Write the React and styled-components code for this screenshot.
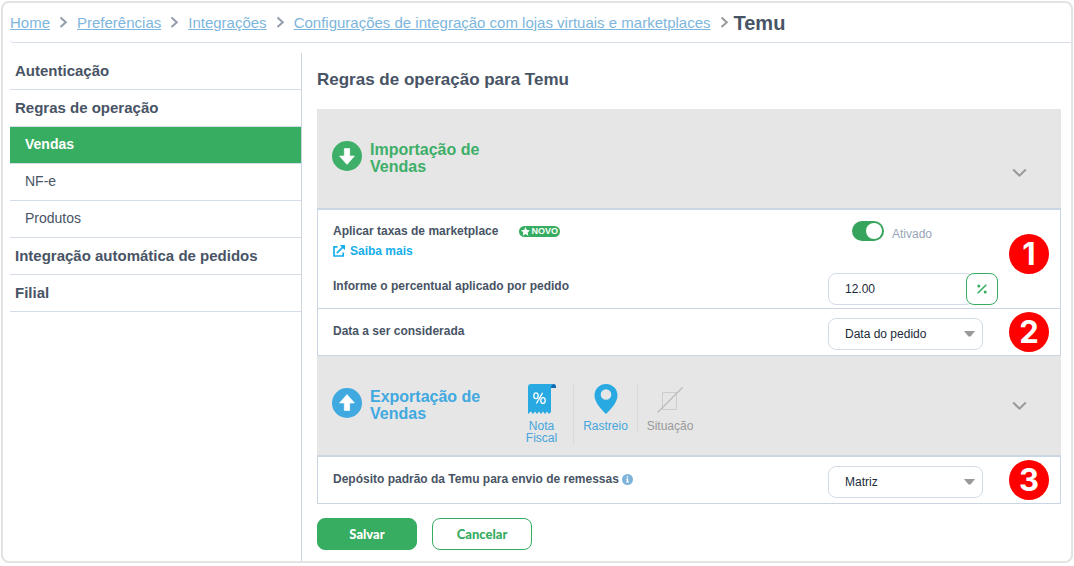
import { useState } from "react";
import styled, { createGlobalStyle } from "styled-components";

const GlobalStyle = createGlobalStyle`
  * {
    box-sizing: border-box;
  }
  body {
    margin: 0;
    background: #fff;
    color: #485465;
    font-family: "Liberation Sans", Arial, sans-serif;
    font-size: 12px;
  }
  button, input, select {
    font-family: inherit;
  }
`;

const Page = styled.div`
  display: flex;
  flex-direction: column;
  min-height: calc(100vh - 4px);
  margin: 1px 1px 3px;
  padding: 0 10px 0 7px;
  border: 2px solid #e3e3e3;
  border-radius: 8px;
`;

const Breadcrumb = styled.nav`
  display: flex;
  align-items: center;
  gap: 9px;
  height: 40px;
  border-bottom: 1px solid #d6deea;
  border-bottom-left-radius: 4px;
  font-size: 15px;
  line-height: 20px;
  margin-right: -10px;
`;

const Crumb = styled.a`
  color: #7db6dc;
  text-decoration: underline;
`;

const Current = styled.strong`
  color: #485465;
  font-size: 20px;
  margin-left: -4px;
`;

const Body = styled.div`
  display: flex;
  flex: 1;
  padding-top: 10px;
`;

const Sidebar = styled.aside`
  width: 292px;
  border-right: 1px solid #cbd5e1;
`;

const SideLink = styled.a`
  display: flex;
  align-items: center;
  height: 37px;
  padding: 0 0 2px ${(p) => (p.$sub ? 15 : 5)}px;
  border-bottom: 1px solid #d3dce8;
  background: ${(p) => (p.$active ? "#37ad61" : "transparent")};
  color: ${(p) => (p.$active ? "#fff" : "#485465")};
  font-size: ${(p) => (p.$sub ? 14 : 15)}px;
  font-weight: ${(p) => (p.$sub && !p.$active ? 400 : 700)};
  text-decoration: none;
`;

const Main = styled.main`
  flex: 1;
  padding: 0 0 11px 15px;
`;

const Title = styled.h1`
  margin: 0;
  padding: 17px 0 19px;
  font-size: 17px;
  line-height: 20px;
`;

const SectionHead = styled.header`
  display: flex;
  align-items: center;
  height: 99px;
  padding: 0 34px 0 15px;
  background: #e6e6e6;
  color: ${(p) => p.$color};
`;

const SectionTitle = styled.h2`
  display: flex;
  align-items: center;
  gap: 8px;
  width: 178px;
  margin: 0;
  padding-bottom: 2px;
  font-size: 16px;
  line-height: 17px;
  svg {
    margin-bottom: 3px;
  }
  span {
    width: 124px;
  }
`;

const Toggle = styled.button`
  display: flex;
  margin-left: auto;
  padding: ${(p) => (p.$low ? "29px 0 0" : 0)};
  border: 0;
  background: none;
  cursor: pointer;
`;

const Steps = styled.ul`
  display: flex;
  align-items: flex-start;
  margin: 0;
  padding: 17px 0 0;
  list-style: none;
`;

const Step = styled.li`
  display: flex;
  flex-direction: column;
  align-items: center;
  gap: 6px;
  width: 64px;
  height: ${(p) => (p.$tall ? 60 : 48)}px;
  border-right: ${(p) => (p.$last ? 0 : 1)}px solid #d9d9d9;
  color: ${(p) => (p.$off ? "#9a9a9a" : "#45a5dc")};
  text-align: center;
  line-height: 12px;
  span {
    max-width: 50px;
  }
`;

const Panel = styled.div`
  border: 1px solid #cbd6e4;
  border-top-width: 2px;
`;

const Row = styled.div`
  display: flex;
  gap: 11px;
  padding: 3px 11px 3px 15px;
  border-top: ${(p) => (p.$divided ? 1 : 0)}px solid #cbd6e4;
`;

const Fields = styled.div`
  flex: 1;
  display: flex;
  flex-direction: column;
  padding-top: 6px;
`;

const Field = styled.div`
  display: grid;
  grid-template-columns: 1fr 170px;
  align-items: start;
  min-height: ${(p) => (p.$tall ? 54 : 32)}px;
`;

const Label = styled.label`
  padding: 6px 0;
  font-weight: 700;
  line-height: 14px;
`;

const LabelGroup = styled.div`
  padding-top: 5px;
`;

const LabelLine = styled.div`
  display: flex;
  align-items: center;
  gap: 21px;
  line-height: 14px;
  ${Label} {
    padding: 0;
  }
`;

const NewTag = styled.span`
  display: flex;
  align-items: center;
  gap: 1px;
  height: 11px;
  padding: 0 2px;
  border-radius: 6px;
  background: #37ad61;
  color: #fff;
  font-size: 9px;
  font-weight: 700;
  line-height: 11px;
`;

const MoreLink = styled.a`
  display: inline-flex;
  align-items: center;
  gap: 5px;
  margin-top: 6px;
  color: #14aeea;
  font-weight: 700;
  line-height: 14px;
  text-decoration: none;
`;

const SwitchLine = styled.div`
  display: flex;
  align-items: center;
  gap: 8px;
  padding: 2px 0 0 24px;
`;

const SwitchInput = styled.input`
  appearance: none;
  display: flex;
  align-items: center;
  width: 32px;
  height: 20px;
  margin: 0;
  padding: 2px;
  border-radius: 10px;
  background: #9aa5b1;
  cursor: pointer;
  &::before {
    content: "";
    width: 16px;
    height: 16px;
    border-radius: 50%;
    background: #fff;
  }
  &:checked {
    justify-content: flex-end;
    background: #37a45e;
  }
`;

const SwitchText = styled.label`
  padding-top: 6px;
  color: #98a5b8;
`;

const InputGroup = styled.div`
  display: flex;
  height: 32px;
`;

const TextInput = styled.input`
  flex: 1;
  min-width: 0;
  margin-right: -8px;
  padding: 0 16px;
  border: 1px solid #d3dce8;
  border-radius: 8px;
  color: #212b39;
  font-size: 12px;
`;

const UnitButton = styled.button`
  display: grid;
  place-items: center;
  width: 32px;
  padding: 0;
  border: 1px solid #37ad61;
  border-radius: 8px;
  background: #fff;
  cursor: pointer;
`;

const SelectWrap = styled.div`
  display: grid;
  grid-template-columns: 1fr;
  align-items: center;
  width: 155px;
  svg {
    grid-area: 1 / 1;
    justify-self: end;
    margin-right: 8px;
    pointer-events: none;
  }
`;

const SelectInput = styled.select`
  grid-area: 1 / 1;
  appearance: none;
  width: 100%;
  height: 32px;
  padding: 0 28px 0 16px;
  border: 1px solid #d3dce8;
  border-radius: 8px;
  background: #fff;
  color: #212b39;
  font-size: 12px;
`;

const Marker = styled.span`
  display: grid;
  place-items: center;
  align-self: center;
  width: 40px;
  height: 40px;
  margin-bottom: ${(p) => (p.$raised ? 10 : 0)}px;
  border-radius: 50%;
  background: #fe0000;
  color: #fff;
  font-family: Inter, sans-serif;
  font-size: 31px;
  font-weight: 700;
  line-height: 40px;
`;

const InfoButton = styled.button`
  display: inline-flex;
  margin-left: 3px;
  padding: 0;
  border: 0;
  background: none;
  vertical-align: -2px;
`;

const Actions = styled.div`
  display: flex;
  gap: 15px;
  padding-top: 14px;
`;

const ActionButton = styled.button`
  width: 100px;
  height: 32px;
  border: 1px solid #37ad61;
  border-radius: 8px;
  background: ${(p) => (p.$primary ? "#37ad61" : "#fff")};
  color: ${(p) => (p.$primary ? "#fff" : "#37ad61")};
  font-family: Lato, sans-serif;
  font-size: 13px;
  font-weight: 900;
  cursor: pointer;
`;

const CrumbArrow = ({ color = "#949cab" }) => (
  <svg width="9" height="13" viewBox="0 0 9 13" fill="none" aria-hidden="true">
    <path d="M1.5 1.5 6.8 6.3 1.5 11" stroke={color} strokeWidth="2" />
  </svg>
);

const ArrowCircle = ({ up }) => (
  <svg width="30" height="30" viewBox="0 0 30 30" aria-hidden="true">
    <circle cx="15" cy="15" r="15" fill="currentColor" />
    <path
      d="M12.3 7.5h5.4v7.500h4.800L15 23.500 7.500 15h4.800z"
      fill="#fff"
      stroke="#fff"
      strokeWidth=".6"
      strokeLinejoin="round"
      transform={up ? "rotate(180 15 15)" : undefined}
    />
  </svg>
);

const ChevronDown = () => (
  <svg width="15" height="10" viewBox="0 0 15 10" fill="none" aria-hidden="true">
    <path d="M1.2 1.5 7.5 7.7 13.8 1.5" stroke="#999" strokeWidth="2" />
  </svg>
);

const ReceiptIcon = () => (
  <svg width="30" height="30" viewBox="0 0 30 30" aria-hidden="true">
    <path d="M24 4V2.5Q24 0 26.5 0T29 3v1z" fill="#1268b3" />
    <path
      d="M4 0h22q-2 .8-2 4v24l-2 2-2-2.4-2 2.4-2-2.4-2 2.4-2-2.4L10 30l-2-2.4L6 30l-2.2-2.4L1 30V3q0-3 3-3z"
      fill="#29a9e1"
    />
    <g fill="none" stroke="#fff" strokeWidth="1.3">
      <ellipse cx="9" cy="11.800" rx="2.200" ry="2.900" />
      <ellipse cx="16" cy="16.600" rx="2.200" ry="2.900" />
      <path d="M15.600 8.800 9.400 19.500" />
    </g>
  </svg>
);

const PinIcon = () => (
  <svg width="24" height="30" viewBox="0 0 24 30" aria-hidden="true">
    <path
      d="M12 0a11.500 11.500 0 0 0-11.500 11.500C.5 18 6.500 24.500 12 30c5.500-5.500 11.500-12 11.500-18.500A11.500 11.500 0 0 0 12 0zm0 5.200a5.300 5.300 0 1 1 0 10.600 5.300 5.300 0 0 1 0-10.600z"
      fill="#29a9e1"
    />
  </svg>
);

const OffIcon = () => (
  <svg width="28" height="30" viewBox="0 0 28 30" fill="none" aria-hidden="true">
    <path d="M6.500 8.500h14v17h-14z" stroke="#cdcdcd" />
    <path d="M1.500 28.500 26.500 3.500" stroke="#bbb" strokeWidth="1.200" />
  </svg>
);

const StarIcon = () => (
  <svg width="9" height="9" viewBox="0 0 10 10" aria-hidden="true">
    <path d="m5 0 1.500 3.300 3.500.4-2.600 2.400.7 3.600L5 7.900 1.900 9.700l.7-3.600L0 3.700l3.500-.4z" fill="#fff" />
  </svg>
);

const ExternalIcon = () => (
  <svg width="12" height="12" viewBox="0 0 12 12" fill="none" aria-hidden="true">
    <path d="M4.500 1.800H1v9.200h9.200V7.500M3.800 8.200l6.500-6.500" stroke="currentColor" strokeWidth="1.700" />
    <path d="M6.800 0H12v5.200z" fill="currentColor" />
  </svg>
);

const PercentIcon = () => (
  <svg width="12" height="12" viewBox="0 0 12 12" aria-hidden="true">
    <path d="M10.300 1.700 1.700 10.300" stroke="#37ad61" strokeWidth="1.600" />
    <circle cx="2.800" cy="3" r="1.500" fill="#37ad61" />
    <circle cx="9.200" cy="9" r="1.500" fill="#37ad61" />
  </svg>
);

const InfoIcon = () => (
  <svg width="11" height="11" viewBox="0 0 11 11" aria-hidden="true">
    <circle cx="5.500" cy="5.500" r="5.500" fill="#7eb3da" />
    <path d="M4.200 4.500h2v3h.8v1H4v-1h.8v-2h-.6zM4.700 2.200h1.500v1.400H4.700z" fill="#fff" />
  </svg>
);

const Select = ({ id, options }) => (
  <SelectWrap>
    <SelectInput id={id}>
      {options.map((option) => (
        <option key={option}>{option}</option>
      ))}
    </SelectInput>
    <svg width="11" height="6" viewBox="0 0 11 6" aria-hidden="true">
      <path d="M0 0h11L6.500 5.500h-2z" fill="#999" />
    </svg>
  </SelectWrap>
);

const crumbs = [
  "Home",
  "Preferências",
  "Integrações",
  "Configurações de integração com lojas virtuais e marketplaces",
];

const menu = [
  { label: "Autenticação" },
  { label: "Regras de operação" },
  { label: "Vendas", sub: true, active: true },
  { label: "NF-e", sub: true },
  { label: "Produtos", sub: true },
  { label: "Integração automática de pedidos" },
  { label: "Filial" },
];

const App = () => {
  const [enabled, setEnabled] = useState(true);
  const [percent, setPercent] = useState("12.00");

  return (
    <>
      <GlobalStyle />
      <Page>
        <Breadcrumb aria-label="Navegação">
          {crumbs.map((crumb, i) => [
            <Crumb key={crumb} href="#">
              {crumb}
            </Crumb>,
            <CrumbArrow
              key={`${crumb}-arrow`}
              color={i === crumbs.length - 1 ? "#999" : undefined}
            />,
          ])}
          <Current>Temu</Current>
        </Breadcrumb>
        <Body>
          <Sidebar>
            {menu.map((item) => (
              <SideLink key={item.label} href="#" $sub={item.sub} $active={item.active}>
                {item.label}
              </SideLink>
            ))}
          </Sidebar>
          <Main>
            <Title>Regras de operação para Temu</Title>

            <SectionHead $color="#3eaf69">
              <SectionTitle>
                <ArrowCircle />
                <span>Importação de Vendas</span>
              </SectionTitle>
              <Toggle $low aria-label="Recolher importação">
                <ChevronDown />
              </Toggle>
            </SectionHead>
            <Panel>
              <Row>
                <Fields>
                  <Field $tall>
                    <LabelGroup>
                      <LabelLine>
                        <Label htmlFor="fees">Aplicar taxas de marketplace</Label>
                        <NewTag>
                          <StarIcon />
                          NOVO
                        </NewTag>
                      </LabelLine>
                      <MoreLink href="#">
                        <ExternalIcon />
                        Saiba mais
                      </MoreLink>
                    </LabelGroup>
                    <SwitchLine>
                      <SwitchInput
                        id="fees"
                        type="checkbox"
                        checked={enabled}
                        onChange={(e) => setEnabled(e.target.checked)}
                      />
                      <SwitchText htmlFor="fees">{enabled ? "Ativado" : "Desativado"}</SwitchText>
                    </SwitchLine>
                  </Field>
                  <Field>
                    <Label htmlFor="percent">Informe o percentual aplicado por pedido</Label>
                    <InputGroup>
                      <TextInput
                        id="percent"
                        value={percent}
                        onChange={(e) => setPercent(e.target.value)}
                      />
                      <UnitButton aria-label="Percentual">
                        <PercentIcon />
                      </UnitButton>
                    </InputGroup>
                  </Field>
                </Fields>
                <Marker $raised>1</Marker>
              </Row>
              <Row $divided>
                <Fields>
                  <Field>
                    <Label htmlFor="date">Data a ser considerada</Label>
                    <Select id="date" options={["Data do pedido", "Data atual"]} />
                  </Field>
                </Fields>
                <Marker>2</Marker>
              </Row>
            </Panel>

            <SectionHead $color="#3fa9e0">
              <SectionTitle>
                <ArrowCircle up />
                <span>Exportação de Vendas</span>
              </SectionTitle>
              <Steps>
                <Step $tall>
                  <ReceiptIcon />
                  <span>Nota Fiscal</span>
                </Step>
                <Step>
                  <PinIcon />
                  <span>Rastreio</span>
                </Step>
                <Step $off $last>
                  <OffIcon />
                  <span>Situação</span>
                </Step>
              </Steps>
              <Toggle aria-label="Recolher exportação">
                <ChevronDown />
              </Toggle>
            </SectionHead>
            <Panel>
              <Row>
                <Fields>
                  <Field>
                    <Label htmlFor="deposit">
                      Depósito padrão da Temu para envio de remessas
                      <InfoButton aria-label="Ajuda">
                        <InfoIcon />
                      </InfoButton>
                    </Label>
                    <Select id="deposit" options={["Matriz", "Filial"]} />
                  </Field>
                </Fields>
                <Marker>3</Marker>
              </Row>
            </Panel>

            <Actions>
              <ActionButton $primary>Salvar</ActionButton>
              <ActionButton>Cancelar</ActionButton>
            </Actions>
          </Main>
        </Body>
      </Page>
    </>
  );
};

export default App;
